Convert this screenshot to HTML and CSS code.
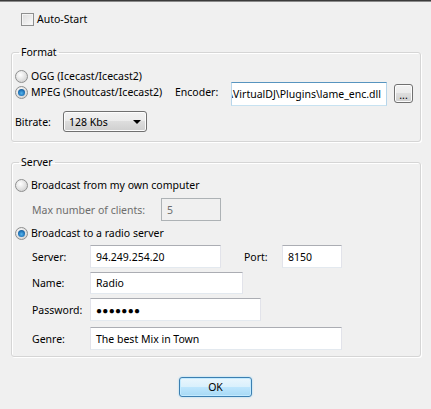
FILE: index.html
```html
<!DOCTYPE html>
<html>
<head>
<meta charset="utf-8">
<link rel="stylesheet" href="styles.css">
</head>
<body>
<div class="topbar"></div>
<main class="dialog">
  <div class="autostart"><span class="checkbox"></span><span>Auto-Start</span></div>

  <fieldset class="group group-format">
    <legend>Format</legend>
    <div class="opt opt-ogg"><span class="radio"></span><span>OGG (Icecast/Icecast2)</span></div>
    <div class="opt-mpeg">
      <span class="radio checked"></span>
      <span class="mpeg-label">MPEG (Shoutcast/Icecast2)</span>
      <span class="enc-label">Encoder:</span>
      <div class="textbox enc"><span>\VirtualDJ\Plugins\lame_enc.dll</span></div>
      <div class="btn dots">...</div>
    </div>
    <div class="bitrate">
      <span class="bitrate-label">Bitrate:</span>
      <div class="combo"><span>128 Kbs</span><span class="arrow"></span></div>
    </div>
  </fieldset>

  <fieldset class="group group-server">
    <legend>Server</legend>
    <div class="opt opt-own"><span class="radio"></span><span>Broadcast from my own computer</span></div>
    <div class="field field-max">
      <span class="lbl lbl-disabled">Max number of clients:</span>
      <div class="textbox disabled w-max">5</div>
    </div>
    <div class="opt opt-radio"><span class="radio checked"></span><span>Broadcast to a radio server</span></div>
    <div class="field field-server">
      <span class="lbl">Server:</span>
      <div class="textbox w-server">94.249.254.20</div>
      <span class="port-lbl">Port:</span>
      <div class="textbox w-port">8150</div>
    </div>
    <div class="field field-name">
      <span class="lbl">Name:</span>
      <div class="textbox w-name">Radio</div>
    </div>
    <div class="field field-pass">
      <span class="lbl">Password:</span>
      <div class="textbox w-pass pass">●●●●●●●</div>
    </div>
    <div class="field field-genre">
      <span class="lbl">Genre:</span>
      <div class="textbox w-genre">The best Mix in Town</div>
    </div>
  </fieldset>

  <div class="actions"><div class="btn ok">OK</div></div>
</main>
</body>
</html>
```

FILE: styles.css
```css
* { box-sizing: border-box; }
html, body { margin: 0; padding: 0; }
body {
  background: #f0f0f0;
  font-family: "Noto Sans", "Open Sans", sans-serif;
  font-size: 10.5px;
  line-height: 14px;
  color: #000;
  width: 431px;
  height: 409px;
  overflow: hidden;
}
.topbar {
  height: 2px;
  background: #3b3b3b;
  border-bottom: 1px solid #8a8a8a;
}
.dialog {
  padding: 0 10px 0 11px;
}

/* checkbox */
.autostart {
  display: flex;
  align-items: center;
  margin-top: 10px;
  padding-left: 10px;
  height: 14px;
}
.checkbox {
  width: 13px;
  height: 13px;
  border: 1px solid #8e8f8f;
  background: linear-gradient(135deg, #dcdcdc, #fbfbfb);
  box-shadow: inset 0 0 0 1px #f4f4f4;
  margin-right: 3px;
  flex: none;
}

/* group boxes */
.group {
  margin: 0;
  border: 1px solid #d5d5d5;
  border-radius: 3px;
  box-shadow: inset 1px 1px 0 #fff, 1px 1px 0 #fff;
  padding: 0 0 0 2px;
  min-width: 0;
}
.group legend {
  padding: 0 2px;
  margin-left: 5px;
  line-height: 14px;
}
.group-format {
  margin-top: 19px;
  padding-top: 9px;
  padding-bottom: 9px;
}
.group-server {
  margin-top: 13px;
  padding-top: 8px;
  padding-bottom: 6px;
}

/* radios */
.opt {
  display: flex;
  align-items: center;
  height: 16px;
}
.radio {
  flex: none;
  width: 13px;
  height: 13px;
  border-radius: 50%;
  border: 1px solid #8e8f8f;
  background: radial-gradient(circle at 40% 35%, #ffffff 0%, #e6e6e6 45%, #c8c8c8 100%);
  margin: 0 3px 0 1px;
  position: relative;
}
.radio.checked::after {
  content: "";
  position: absolute;
  left: 2px; top: 2px;
  width: 7px; height: 7px;
  border-radius: 50%;
  background: radial-gradient(circle at 50% 60%, #56b5ee 0%, #1f73b8 55%, #0f3f6b 100%);
}

/* MPEG row */
.opt-mpeg {
  display: flex;
  align-items: flex-start;
  margin-top: -2px;
  height: 24px;
}
.opt-mpeg .radio { margin-top: 4px; }
.mpeg-label { margin-top: 3px; width: 144px; flex: none; white-space: nowrap; }
.enc-label { margin-top: 3px; width: 56px; flex: none; }
.textbox {
  background: #fff;
  border: 1px solid;
  border-color: #abadb3 #e2e3ea #e3e9ef #e2e3ea;
  height: 23px;
  padding: 0 5px;
  display: flex;
  align-items: center;
  white-space: nowrap;
  overflow: hidden;
  flex: none;
}
.enc {
  width: 156px;
  height: 24px;
  justify-content: flex-end;
  border-color: #5794bf #b7d5ea #c7e2f1 #b7d5ea;
}
.btn {
  border: 1px solid #707070;
  border-radius: 3px;
  background: linear-gradient(#f2f2f2 0%, #ebebeb 50%, #dddddd 50%, #cfcfcf 100%);
  box-shadow: inset 0 0 0 1px #fcfcfc;
  display: flex;
  align-items: center;
  justify-content: center;
}
.dots {
  width: 19px;
  height: 19px;
  margin: 2px 0 0 7px;
  line-height: 10px;
  padding-bottom: 2px;
  align-items: flex-end;
}

/* bitrate */
.bitrate {
  display: flex;
  align-items: center;
  margin-top: 5px;
  padding-left: 1px;
}
.bitrate-label { width: 48px; }
.combo {
  width: 84px;
  height: 21px;
  border: 1px solid #707070;
  border-radius: 3px;
  background: linear-gradient(#f2f2f2 0%, #ebebeb 50%, #dddddd 50%, #cfcfcf 100%);
  box-shadow: inset 0 0 0 1px #fcfcfc;
  display: flex;
  align-items: center;
  padding: 0 5px 0 5px;
}
.combo span:first-child { flex: 1; }
.arrow {
  width: 0; height: 0;
  border-left: 4px solid transparent;
  border-right: 4px solid transparent;
  border-top: 4px solid #000;
}

/* server fields */
.field {
  display: flex;
  align-items: center;
  padding-left: 18px;
}
.lbl { width: 58px; flex: none; }
.lbl-disabled { width: 129px; color: #6d6d6d; }
.textbox.disabled {
  background: #f0f0f0;
  border-color: #adb2b5;
  color: #6d6d6d;
}
.field-max { margin-top: 5px; }
.w-max { width: 60px; }
.opt-radio { margin-top: 4px; }
.field-server { margin-top: 4px; }
.w-server { width: 131px; }
.port-lbl { width: 38px; margin-left: 23px; }
.w-port { width: 60px; }
.field-name { margin-top: 4px; }
.w-name { width: 153px; height: 22px; }
.field-pass { margin-top: 4px; }
.w-pass { width: 171px; }
.pass { font-size: 10px; letter-spacing: 0.3px; }
.field-genre { margin-top: 6px; }
.w-genre { width: 252px; }

/* OK */
.actions {
  display: flex;
  justify-content: center;
  margin-top: 20px;
  padding-right: 1px;
}
.ok {
  width: 73px;
  height: 20px;
  border-color: #3c7fb1;
  background: linear-gradient(#eaf6fd 0%, #d9f0fc 50%, #bee6fd 50%, #a7d9f5 100%);
  box-shadow: inset 0 0 0 1px #c2eaff, 0 0 2px #8fd3f7;
}
```
